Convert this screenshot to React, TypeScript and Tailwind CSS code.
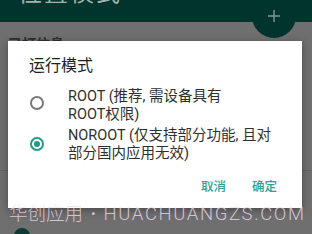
import type { ReactNode } from 'react';

const font = { fontFamily: 'Roboto, "Noto Sans CJK SC", sans-serif' };

function Radio({ checked }: { checked: boolean }) {
  return (
    <span
      className={`flex h-[14px] w-[14px] shrink-0 items-center justify-center rounded-full border-2 ${
        checked ? 'border-[#1f9b8a]' : 'border-[#7a7a7a]'
      }`}
    >
      {checked && <span className="h-[6px] w-[6px] rounded-full bg-[#1f9b8a]" />}
    </span>
  );
}

function Option({ checked, radioTop, children }: { checked: boolean; radioTop: string; children: ReactNode }) {
  return (
    <div className="flex items-start pl-[22px]">
      <div className={radioTop}>
        <Radio checked={checked} />
      </div>
      <div className="ml-[24px] text-[14.5px] leading-[18px] text-[#2f2f2f]">{children}</div>
    </div>
  );
}

export default function App() {
  return (
    <div className="relative h-[234px] w-[312px] overflow-hidden bg-[#6f6f6f]" style={font}>
      {/* page behind the dim */}
      <div className="flex h-[22px] flex-col bg-[#01342d] pl-[18px]">
        <div className="mt-[-21px] text-[24px] leading-[28px] tracking-[2px] text-[#9fb2ad]">位置模式</div>
      </div>
      <div className="pl-[8px] pt-[14px] text-[14px] font-bold leading-[16px] text-[#2e2e2e]">已打信息</div>
      <div className="mt-[118px] h-px w-full bg-[#646464]" />

      <div className="absolute left-[252px] top-[-6px] flex h-[44px] w-[44px] items-center justify-center rounded-full bg-[#01342d]">
        <svg width="12" height="12" viewBox="0 0 12 12">
          <path d="M6 0v12M0 6h12" stroke="#7f9994" strokeWidth="1.4" />
        </svg>
      </div>
      <div className="absolute left-[14px] top-[228px] h-[16px] w-[16px] rounded-full bg-[#0b3b34]" />

      {/* dialog */}
      <div className="absolute left-[8px] top-[41px] flex h-[167px] w-[294px] flex-col bg-white shadow-[0_2px_8px_rgba(0,0,0,0.35)]">
        <div className="pl-[21px] pt-[15px] text-[16px] leading-[20px] text-[#1f1f1f]">运行模式</div>
        <div className="mt-[12px] flex flex-col gap-[3px]">
          <Option checked={false} radioTop="mt-[8px]">
            <div>ROOT (推荐, 需设备具有</div>
            <div>ROOT权限)</div>
          </Option>
          <Option checked radioTop="mt-[10px]">
            <div>NOROOT (仅支持部分功能, 且对</div>
            <div>部分国内应用无效)</div>
          </Option>
        </div>
        <div className="mt-auto mb-[13px] flex justify-end gap-[26px] pr-[25px] text-[12.5px] font-medium leading-[16px] text-[#2aa293]">
          <span>取消</span>
          <span>确定</span>
        </div>
      </div>

      {/* watermark */}
      <div className="absolute left-[9px] top-[203px] flex items-center whitespace-nowrap text-[18.5px] font-light leading-[22px] text-[#f2dcef]/80">
        <span>华创应用</span>
        <span className="ml-[8px] text-[14px]">•</span>
        <span className="ml-[8px] tracking-[1.6px]">HUACHUANGZS.COM</span>
      </div>
    </div>
  );
}
